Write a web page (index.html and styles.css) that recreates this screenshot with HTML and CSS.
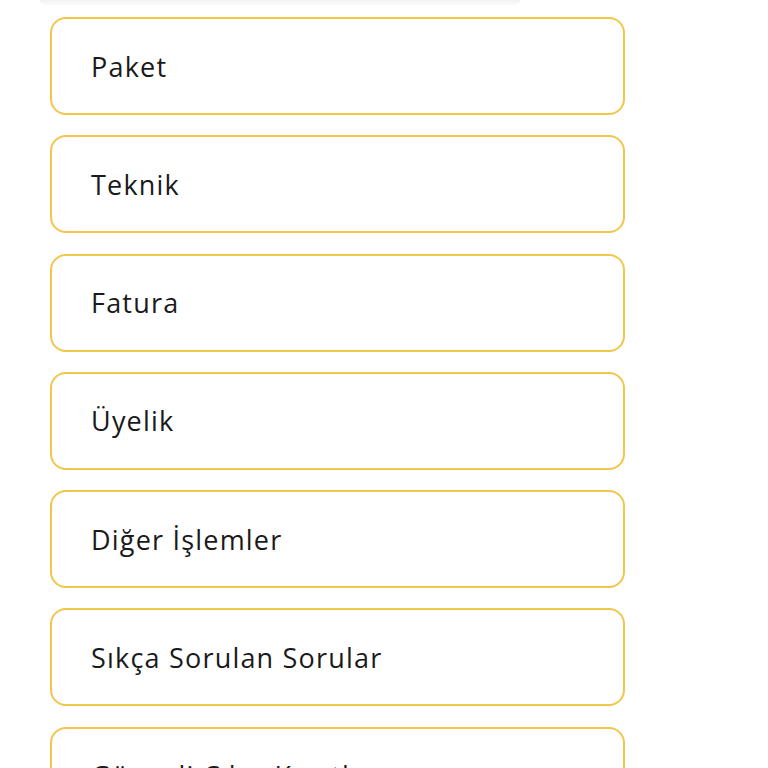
FILE: index.html
```html
<!DOCTYPE html>
<html lang="tr">
<head>
    <meta charset="UTF-8">
    <meta name="viewport" content="width=device-width, initial-scale=1.0">
    <title>Yardım</title>
    <link rel="stylesheet" href="styles.css">
</head>
<body>
    <div class="page">
        <div class="top-edge"></div>
        <div class="menu">
            <div class="menu-item">Paket</div>
            <div class="menu-item">Teknik</div>
            <div class="menu-item">Fatura</div>
            <div class="menu-item">Üyelik</div>
            <div class="menu-item">Diğer İşlemler</div>
            <div class="menu-item">Sıkça Sorulan Sorular</div>
            <div class="menu-item">Güvenli Çıkış Kayıtları</div>
        </div>
    </div>
</body>
</html>
```

FILE: styles.css
```css
body {
    margin: 0;
    background-color: #fff;
    font-family: "Open Sans", "DejaVu Sans", sans-serif;
    overflow: hidden;
}
.page {
    height: 768px;
    overflow: hidden;
}
.top-edge {
    height: 5px;
    width: 480px;
    margin-left: 40px;
    background: linear-gradient(#f3f3f4, #fafafa);
    border-radius: 0 0 6px 6px;
}
.menu {
    display: flex;
    flex-direction: column;
    gap: 20.3px;
    padding: 12px 0 0 50px;
    width: 575px;
}
.menu-item {
    box-sizing: border-box;
    height: 98px;
    flex-shrink: 0;
    border: 2px solid #f2c64a;
    border-radius: 16px;
    display: flex;
    align-items: center;
    padding-left: 39px;
    font-size: 27px;
    color: #1a1a1a;
    letter-spacing: 1.2px;
}
```
